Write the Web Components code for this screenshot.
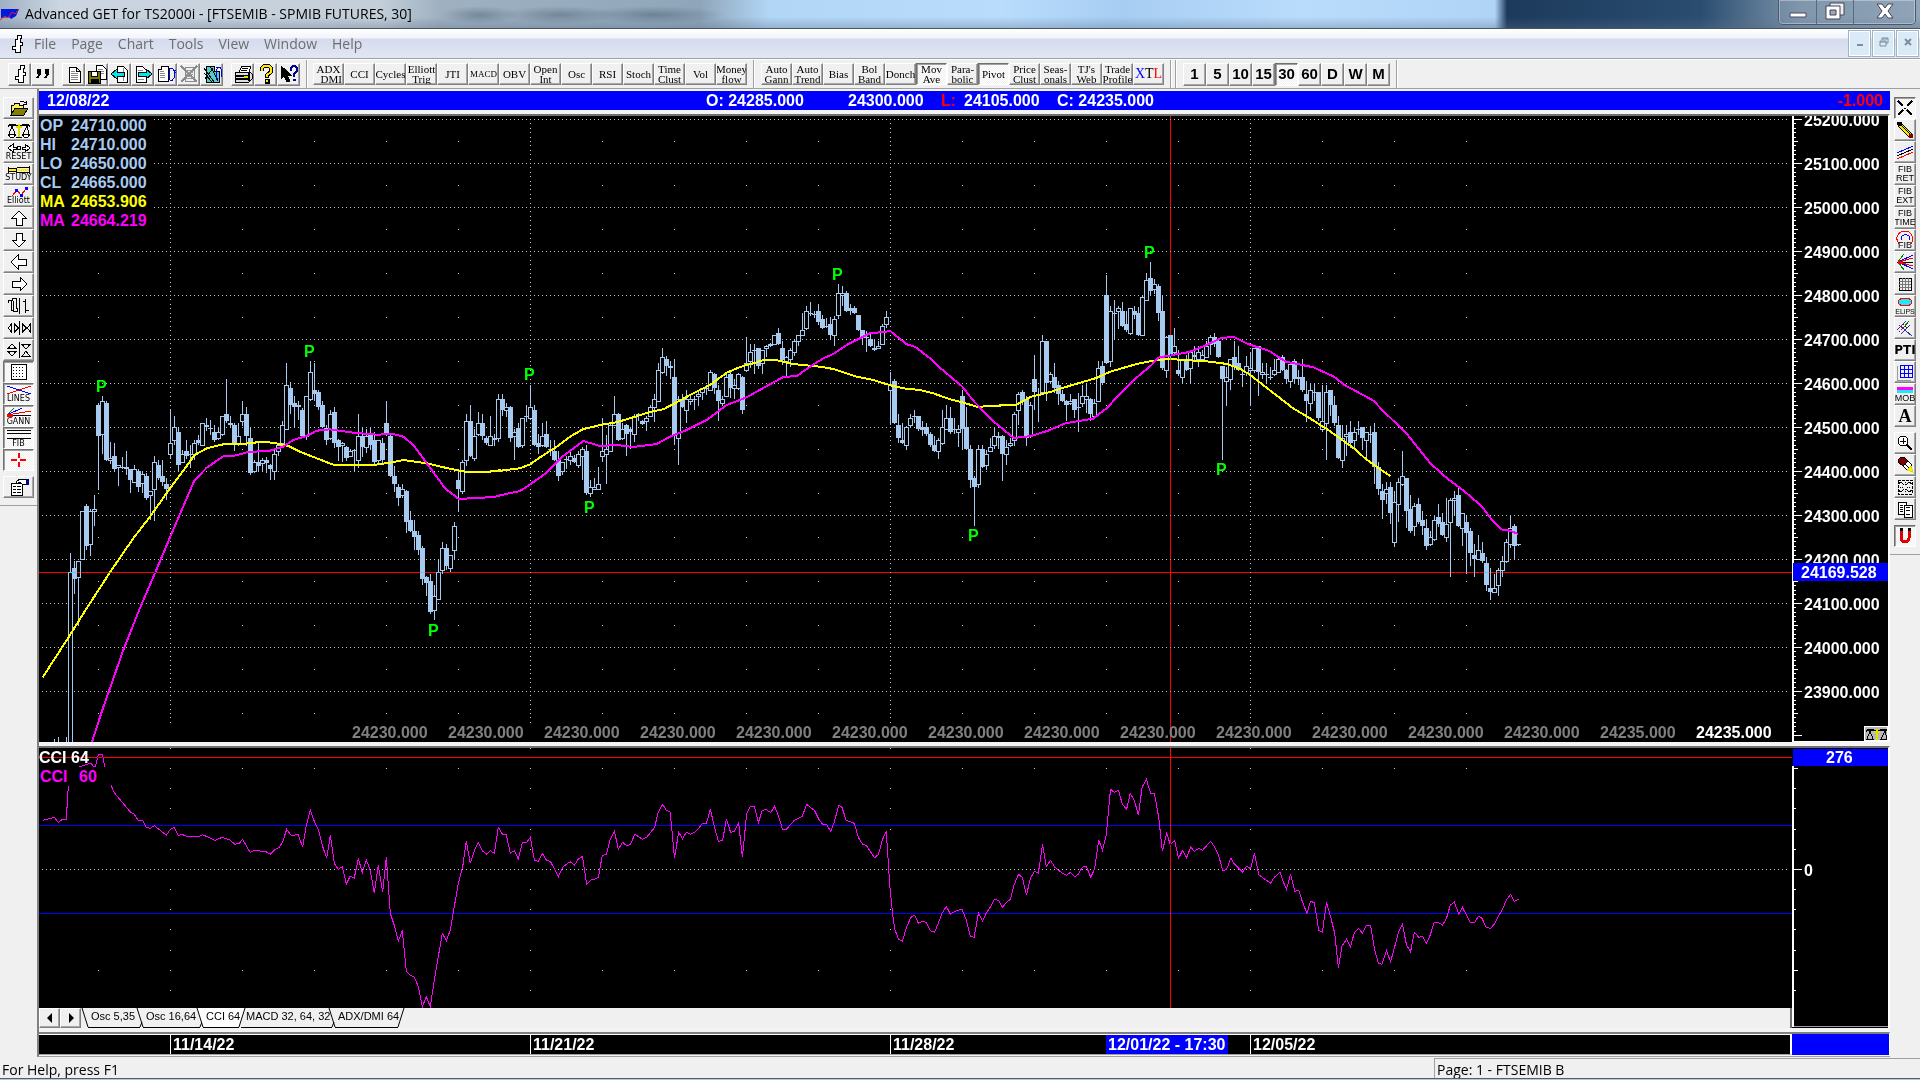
<!DOCTYPE html>
<html lang="en">
<head>
<meta charset="utf-8">
<title>Advanced GET for TS2000i</title>
<style>
  html, body { margin: 0; height: 100%; overflow: hidden; }
  body { background: #f0f0f0; font-family: "Liberation Sans", Arial, sans-serif; color: #000; }
</style>
</head>
<body>
<get-window></get-window>

<script>
const svg = (w, h, body) =>
  `<svg width="${w}" height="${h}" viewBox="0 0 ${w} ${h}" fill="none" stroke="#000" shape-rendering="crispEdges" aria-hidden="true">${body}</svg>`;

const SCALES = '<path d="M1 5l2-3h4l4 2h2l4-2h4l2 3" /><path d="M3 3h4l4 2h2l4-2h4"/><path d="M12 2v13M9 5h6" stroke="#dede00" stroke-width="2"/><path d="M9 15h6M5 4L2 12M5 4l3 8M20 4l-4 8M20 4l2 8"/><path d="M1 12h8l-2 3H3zM15 12h8l-2 3h-4z" fill="#fff"/>';

const ICONS = {
  bar: svg(18, 20, '<path d="M9.500 1.500h4v3h-1v4h2v3h-2v7h-5v-3h-3v-3h3v-7h2z" fill="#fff"/>'),
  quote: svg(18, 18, '<path d="M6 6v3l-3 4M14 6v3l-3 4" stroke-width="2"/><path d="M3 4h3v4H3zM11 4h3v4h-3z" fill="#000"/>'),
  page: svg(18, 18, '<path d="M4 2h7l4 4v11H4zM11 2v4h4" fill="#fff"/><path d="M6 6h4M6 8h7M6 10h7M6 12h7M6 14h7" stroke="#888"/>'),
  save: svg(20, 20, '<path d="M9 1h6l4 4v10H9z" fill="#fff"/><path d="M11 5h5M11 7h6M11 9h6" stroke="#888"/><path d="M1 7h12v12H1z" fill="#787800"/><path d="M4 7h6v5H4z" fill="#fff"/><path d="M4 15h7v4H4z" fill="#000"/>'),
  prev: svg(20, 20, '<path d="M7 2h6l4 4v12H7z" fill="#fff"/><path d="M13 4v13" stroke="#888"/><path d="M1 10l6-5v3h7v4H7v3z" fill="#00e5ee"/>'),
  next: svg(20, 20, '<path d="M3 2h6l4 4v12H3z" fill="#fff"/><path d="M5 6h5M5 15h6" stroke="#888"/><path d="M19 10l-6-5v3H5v4h8v3z" fill="#00e5ee"/>'),
  flip: svg(20, 20, '<path d="M5 2h7v15H2V5h3z" fill="#fff"/><path d="M4 7h4M4 9h5M4 11h5M4 13h5" stroke="#888"/><path d="M15 4l-2 2v9l2 2 2-1M13 4h3l2 2v8l-2 2M18 8h2M17 6h3" stroke="#0000d8"/>'),
  noPage: svg(20, 20, '<path d="M2 2l16 16M18 2L2 18" stroke="#8a8a8a" stroke-width="2"/><path d="M6 3h9v14H6z" stroke="#8a8a8a"/><path d="M7 6h7M7 8h7M7 10h7M7 12h7M7 14h7" stroke="#999"/>'),
  flipAll: svg(20, 20, '<path d="M4 2h8v5h5v11H4z" fill="#5cc"/><path d="M2 4l10 14M2 9l8 9M8 2l8 14M3 15l8-11" /><path d="M16 4l-2 2v9l2 2M14 3h4l1 2v8" stroke="#0000d8"/>'),
  print: svg(20, 20, '<path d="M6 8l3-6h9l-2 6" fill="#fff"/><path d="M9 4h6M8 6h6"/><path d="M2 8h15l2 2v5l-3 3H2z" fill="#ddd"/><path d="M2 12h14M16 9v8M3 15h12" stroke-width="2"/><path d="M11 13h4" stroke="#dede00" stroke-width="2"/>'),
  help: svg(18, 20, '<path d="M5 7V4l2-2h5l2 2v4l-4 3v3" stroke-width="4"/><path d="M8 15h4v4H8z" fill="#000"/><path d="M5 7V4l2-2h5l2 2v4l-4 3v2M9 17h2" stroke="#ffe800" stroke-width="2"/>'),
  arrowHelp: svg(20, 20, '<path d="M2 2v13l3-3 3 6 3-1-3-6h4z" fill="#000"/><path d="M12 7V4l2-2h2l2 2v3l-3 3v3M14 16h3" stroke="#000090" stroke-width="2"/>'),

  open: svg(20, 16, '<path d="M2 15V5h3l1-2h4v2h4v3" fill="#ffef60"/><path d="M2 15l4-7h13l-4 7z" fill="#808000"/><path d="M11 2l2-1 4 2v2M14 4h3V1"/>'),
  scales: svg(24, 16, SCALES),
  reset: svg(24, 10, '<path d="M1 5l5-4v3h3v2H6v3zM23 5l-5-4v3h-3v2h3v3z" fill="#fff"/><circle cx="12" cy="5" r="2"/>'),
  study: svg(24, 8, '<path d="M1.500 1v6M1.500 2.500h8M1.500 5.500h8M9.500 1.500h13M9.500 6.500h13M9.500 1.500v5M22.500 0v8"/><path d="M2 4h7M10 4h12" stroke="#ffef00" stroke-width="2"/>'),
  elliott: svg(18, 10, '<path d="M2 9l5-6 4 5 5-6" stroke="#f00"/><path d="M5 2h2v2H5zM10 7h2v2h-2zM15 0h2v2h-2z" stroke="#00f" fill="#00f"/>'),
  up: svg(18, 16, '<path d="M9 1l7 7h-4v7H6V8H2z" fill="#fff"/>'),
  down: svg(18, 16, '<path d="M9 15l7-7h-4V1H6v7H2z" fill="#fff"/>'),
  left: svg(18, 16, '<path d="M1 8l7-7v4h8v6H8v4z" fill="#fff"/>'),
  right: svg(18, 16, '<path d="M17 8l-7-7v4H2v6h8v4z" fill="#fff"/>'),
  bars: svg(24, 18, '<path d="M1.500 5.500v-2h4v-2h4v10h1v3h-4v-11M4.500 3.500v10h2v-9M12.500 1v16M18.500 2v14M16 4.500h2M18 13.500h4"/>'),
  hzoom: svg(24, 16, '<path d="M4.500 4v8L1 8zM7.500 4v8l4-4zM12.500 1v14M15.500 4v8l4-4zM23.500 4v8L20 8z" stroke-width="1"/>'),
  vzoom: svg(24, 18, '<path d="M1 7.500L5 3l4 4.500zM1 10.500L5 15l4-4.500zM12.500 1v16M15 3.500h8L19 8zM15 15.500h8L19 10z"/>'),
  grid: svg(18, 18, '<path d="M1 1h15v15H1z" fill="#fff" stroke-width="1"/><path d="M3 4h12M3 7h12M3 10h12M3 13h12" stroke-dasharray="1 2"/>'),
  lines: svg(26, 10, '<path d="M1 1l24 8" stroke="#00f"/><path d="M1 9l24-8" stroke="#f00"/>'),
  gann: svg(26, 11, '<path d="M1 8l7-7" stroke="#008000"/><path d="M1 8l15-7" stroke="#00f"/><path d="M1 8l24-4" stroke="#f00"/><path d="M1 8h24"/><path d="M1 8h6" stroke="#f00" stroke-width="3"/>'),
  fib: svg(26, 11, '<path d="M1 1.500h24M1 4.500h24M1 9.500h24"/>'),
  cross: svg(18, 16, '<path d="M1 8h6M10 8h6M8.500 1v5M8.500 10v5" stroke="#f00" stroke-width="2"/>'),
  props: svg(20, 18, '<path d="M2 5h11v12H2z" fill="#fff"/><path d="M4 8h3M8 8h4M4 11h3M8 11h4M4 14h3M8 14h4"/><path d="M7 4l4-3h6v5h-4l-2-2-3 2z" fill="#fff"/><path d="M18 1v6" stroke="#000080" stroke-width="3"/>'),

  select: svg(18, 18, '<path d="M2 2l5 5M16 2l-5 5M2 16l5-5M16 16l-5-5" stroke-width="2"/><path d="M8 9h2"/>'),
  pencil: svg(18, 18, '<path d="M2 2h3l10 10v3h-3L2 5z" fill="#f2ea00"/><path d="M5 4l10 10"/><path d="M1 1h4v3H2z" fill="#000"/><path d="M13 13h3v3h-3z" fill="#800000" stroke="#800000"/>'),
  trend: svg(18, 16, '<path d="M1 9L17 2" stroke="#00f"/><path d="M1 12l16-7"/><path d="M1 15l16-7" stroke="#f00"/>'),
  arc: svg(20, 20, '<path d="M4 14C-2 6 6 1 10 1s11 5 6 13" stroke="#f00"/><path d="M6 10c0-7 9-7 9 0" stroke="#00f"/><text x="10" y="18" text-anchor="middle" font-size="9" font-family="Liberation Sans" fill="#000" stroke="none">FIB</text>'),
  fan: svg(18, 18, '<path d="M2 9l6-8M2 9l6 8" stroke="#008000"/><path d="M2 9L17 2M2 9l15 7" stroke="#00f"/><path d="M2 9l15-4M2 9l15 4" stroke="#f00"/><path d="M1 9h16"/><path d="M2 9h5" stroke="#f00" stroke-width="3"/>'),
  mesh: svg(16, 16, '<path d="M2 2h12v12H2z"/><path d="M2 5h12M2 8h12M2 11h12M5 2v12M8 2v12M11 2v12" stroke="#777"/>'),
  ellipse: svg(18, 11, '<ellipse cx="9" cy="5" rx="7" ry="4" fill="#20e8f8" stroke="#f00"/>'),
  fork: svg(18, 18, '<path d="M1 11L10 2M5 15l9-9M3 6l13 11" stroke="#333399"/><path d="M8 8l5-6" stroke="#008000"/><path d="M3 13l5-5M7 5l4 4" stroke="#900" stroke-dasharray="2 1"/>'),
  blueGrid: svg(18, 18, '<path d="M1 3v14h14" stroke="#999"/><path d="M4 2h12v12H4zM4 6h12M4 10h12M8 2v12M12 2v12" stroke="#00f"/>'),
  mob: svg(18, 8, '<path d="M1 2h16" stroke="#f0f" stroke-width="3"/><path d="M1 5h16" stroke="#20e8f8" stroke-width="3"/>'),
  zoom: svg(18, 18, '<circle cx="7" cy="7" r="5" fill="#fff"/><path d="M4 7h6M7 4v6"/><path d="M11 11l5 5" stroke-width="2"/>'),
  eraser: svg(18, 18, '<path d="M2 4l3-3h3l4 4-5 5-5-4z" fill="#800000"/><path d="M12 5l4 4-5 5-4-4z" fill="#fff"/><path d="M15 10l2 6-6-2z" fill="#ffef00" stroke="#dcdc00"/><path d="M9 8l4 4"/>'),
  pattern: svg(18, 18, '<path d="M2 2h14v14H2z" stroke-dasharray="3 1"/><path d="M2 6l3-2 3 3M16 6l-3-2-3 3M2 12l3 2 3-3M16 12l-3 2-3-3"/><path d="M4 9h3M11 9h3M9 4v3M9 11v3" stroke-dasharray="1 1"/>'),
  copy: svg(18, 18, '<path d="M2 2h8v12H2z" fill="#fff"/><path d="M8 5h8v12H8z" fill="#fff"/><path d="M4 5h3M4 7h3M4 9h3M4 11h3M10 8l2-1 2 1M10 11l2-1 2 1M10 14h4"/>'),
  magnet: svg(18, 18, '<path d="M5 3v8c0 5 8 5 8 0V3" stroke="#e00000" stroke-width="3"/><path d="M5 1v3M13 1v3" stroke-width="3"/>'),
};

// Bars are "high,top,bottom,low" in thirds of a pixel below the run's origin; a trailing f marks a filled body.
const BARS = [
  { x: 70, y: 340, bars: '640,697,1220,1206 663,685,718,762f 663,664,712,860 514,514,658,662 492,499,619,630f 508,514,613,650 465,508,514,558 190,195,289,452f 168,184,283,342 183,189,361,363f 308,355,361,374 310,350,388,395f 376,376,382,440 353,382,385,388 333,382,388,407f 388,388,422,459f 376,388,426,430 388,394,442,458f 394,402,430,460 400,408,475,480f 453,453,467,540 348,367,448,545 362,375,416,420f 360,409,428,440f 416,433,449,480f 210,311,343,356 228,262,300,315 262,276,376,395f 330,343,367,371 300,334,348,358f 315,343,346,386 300,311,344,362 286,300,311,315f 250,250,316,320 234,256,262,275f 242,266,269,285 255,276,302,307f 266,278,296,300 228,229,284,288 117,223,244,250f 228,250,256,265f 250,256,316,333f 250,290,310,320 183,223,244,260 201,222,289,320f 266,295,401,407f 360,367,394,400 310,367,378,395f 355,361,370,398 352,361,371,400f 374,376,388,420f 330,343,394,420 310,316,334,350 244,256,310,325 69,136,268,272 128,144,196,222f 168,190,202,266f 184,196,202,242f 204,210,290,290f 168,170,289,300 63,97,178,183 69,150,163,183f 152,157,203,210f 183,196,262,264f 256,264,302,315f 210,223,295,300 201,217,310,325f 298,302,322,365f 308,311,317,366 320,322,355,363f 328,335,349,352 327,332,334,398 222,290,361,386 261,290,322,352f 267,290,322,340 261,283,317,330f 277,302,367,376f 302,302,361,371 295,310,361,374f 183,250,284,290f 282,289,409,412f 380,409,433,458f 432,442,475,498f 433,448,466,476 452,454,547,580f 513,541,575,578f 540,574,592,630f 573,587,631,645f 618,625,718,735f 710,712,730,768f 702,724,818,822f 735,769,811,842 657,697,778,782 606,625,691,702 612,626,680,690f 646,646,685,696 546,559,631,660 395,421,448,518f 361,367,454,464 223,244,361,380 196,244,350,353f 267,290,355,365 216,250,283,290 222,250,290,302f 288,295,311,315f 228,289,316,320 282,296,302,320f 162,178,296,308 162,178,210,228f 190,202,210,232 200,202,296,308f 267,276,290,360 250,266,323,325f' },
  { x: 522, y: 250, bars: '505,505,586,596 465,498,501,518 405,472,505,510 465,480,587,590f 553,580,592,612f 519,559,586,592 513,553,593,596f 570,597,600,618 570,605,631,635f 603,630,680,695f 636,637,664,676 618,629,632,657 603,619,631,645 615,625,637,640f 604,613,646,655 592,598,619,690 585,604,731,735f 690,712,730,743 684,712,718,720 651,703,718,722 504,605,619,637 555,598,613,702 520,526,604,608 438,493,526,530 490,493,572,575f 519,538,566,570 523,526,553,618f 535,538,548,597f 492,499,553,578 490,493,500,515f 510,514,522,526f 500,505,514,545 465,472,499,502 432,448,472,518 339,361,454,458 294,322,367,372 320,328,349,380f 334,349,355,388f 328,382,560,585f 438,448,566,645 432,448,472,476f 420,448,481,519 436,448,454,466 438,448,451,480 426,433,439,468 414,415,427,452 405,414,417,437 361,367,421,425 370,373,415,432f 405,421,454,513f 438,448,460,470 367,382,439,442 363,373,415,445f 387,406,415,448 370,374,416,420 380,382,481,492f 261,340,361,366 282,307,334,355 282,300,303,372 294,295,349,358f 300,301,340,372 285,290,295,322 280,282,290,292f 255,256,283,286 234,250,283,287f 273,295,332,347f 318,322,335,380 294,301,328,352 268,275,307,320 255,256,275,290 190,241,256,260 168,184,235,240 156,190,193,200 184,192,196,206 162,184,217,225f 195,208,235,239f 205,228,231,236 201,223,256,270f 200,208,256,288 102,130,196,207 108,130,136,168 123,130,184,187f 162,175,184,195f 170,175,190,193f 195,196,241,244f 240,241,262,287f 244,262,265,306 249,267,290,293f 267,295,301,305f 273,290,296,298 223,229,283,286 183,202,223,234 366,402,421,525 388,394,520,524f 492,526,565,580f 520,571,580,584f 530,532,587,600 492,506,527,535 480,500,503,520 498,500,538,544f 513,532,541,558f 520,532,553,560f 547,553,586,592f 559,587,605,607f 564,572,604,629 480,532,580,586 465,505,538,542 471,505,548,552f 505,538,541,552 525,538,547,592 420,439,538,598f 471,532,598,600f 585,598,691,715f 678,685,712,828f 586,598,703,716 585,598,653,656f 600,613,646,660 565,592,605,608 531,559,586,598 547,559,566,597f 556,559,613,695f 570,592,613,645 564,580,586,592 488,493,571,590 426,433,480,525' },
  { x: 1022, y: 230, bars: '480,487,515,525f 500,508,625,650f 518,526,620,625 375,448,487,540f 474,493,500,578f 315,334,487,490 334,334,460,513f 427,434,454,460 399,442,475,490f 453,466,493,525f 480,493,515,518f 512,514,526,573f 492,514,520,525 507,508,541,564f 490,531,534,606 465,499,520,532 462,500,508,550 505,508,553,573f 508,520,559,563 393,415,514,518 393,409,461,465f 135,196,400,404f 228,244,394,413 210,249,252,330 228,236,244,298 216,244,289,292f 244,283,302,306f 234,236,310,315 228,244,256,267f 232,250,317,320f 195,202,316,320 129,151,211,215 96,145,184,200f 147,163,178,193 163,169,250,275f 196,244,415,420f 320,322,421,446 316,316,377,392f 294,349,367,380 360,420,434,440f 388,389,442,460 375,388,421,425f 367,367,415,461 348,375,383,390f 350,367,389,413 360,376,388,392 333,349,382,386 315,322,343,375 309,322,343,353f 330,334,382,386f 409,409,448,690f 412,442,454,530 387,388,448,480 333,382,409,420f 348,400,421,425f 425,433,436,473 380,409,428,440 366,415,421,530 354,355,421,430 348,349,427,498f 400,428,434,448 400,432,435,460 412,441,444,452 387,421,433,440 386,388,428,430 375,382,421,425f 418,421,448,464f 400,402,454,474 388,394,448,461f 420,442,448,465f 387,442,482,486f 453,493,514,578f 459,481,520,545 461,486,489,513 487,487,566,573f 465,574,598,606 466,487,580,690 480,481,526,558f 498,526,580,590f 558,586,685,689f 586,625,691,716 586,613,619,678 573,607,640,655f 592,607,631,657 573,597,600,615 591,592,625,660f 606,607,631,690 590,612,615,640 579,607,712,762f 697,712,778,795f 762,784,811,869f 756,778,790,822 757,772,850,882f 783,817,937,953 745,757,823,876 663,739,763,768 744,745,844,895f 795,838,905,909f 820,829,889,920 804,823,878,882f 843,871,889,915f 869,895,949,960f 903,922,943,948 855,871,928,933 822,862,883,892f 850,878,916,920f 804,883,922,936 804,811,878,1041 783,805,811,857 775,796,889,893f 850,850,895,948 860,878,911,1032f 895,904,970,1008f 942,976,989,1041f 915,961,988,992 936,970,995,1000f 981,1000,1067,1085f 1014,1075,1088,1112f 1032,1075,1087,1091 1014,1021,1066,1098 980,994,1021,1041 928,937,994,999 855,895,943,954 882,889,949,990f 943,943,946,948' },
];

// Line runs: origin, horizontal scale, then x,y pairs. Vertical scale is always three units per pixel.
const SLOW_MA = [
  [40, 340, 3, '8,1012 90,885 140,805 210,697 280,595 330,530 391,444 430,392 463,346 500,325 550,313 600,313 660,306 700,308 745,318 780,335 830,355 880,374 920,376 1000,375 1050,368 1090,360 1160,370 1220,384 1280,396 1340,396 1380,391'],
  [500, 250, 3, '0,662 60,655 91,643 120,622 170,590 210,560 250,537 310,523 350,517 400,502 450,486 490,478 530,457 580,430 630,405 680,368 720,351 760,340 790,330 830,331 880,342 960,350 1000,357 1070,380 1120,390 1171,406 1210,415 1260,420 1300,430 1350,448 1387,457 1430,470 1470,469 1500,467'],
  [1000, 230, 2.904, '0,526 48,524 90,500 150,485 200,468 280,444 320,425 400,401 440,393 490,387 550,391 600,394 660,402 700,418 727,435 780,478 850,534 900,565 950,598 985,623 1030,657 1060,685 1110,722 1134,738'],
];
const FAST_MA = [
  [40, 340, 3, '156,1206 187,1110 210,1045 250,930 300,804 346,697 391,590 463,422 500,383 550,349 580,348 625,336 690,332 730,320 760,300 800,288 830,272 870,268 930,277 1010,284 1060,282 1090,290 1120,315 1165,376 1215,445 1255,476 1310,475 1375,469'],
  [500, 250, 3, '0,736 60,723 91,703 140,668 190,618 250,573 300,588 350,585 400,591 470,582 510,560 560,540 620,510 680,465 740,442 800,408 850,381 890,378 930,350 970,325 1000,312 1040,285 1110,250 1150,246 1171,243 1220,283 1245,290 1290,325 1310,345 1387,410 1420,452 1480,514'],
  [1000, 230, 2.904, '0,590 40,624 90,618 140,602 190,580 270,566 310,535 350,490 400,440 440,405 460,383 500,375 550,366 600,345 640,325 678,320 720,342 780,362 830,395 910,412 970,440 1000,465 1085,512 1110,540 1180,610 1250,700 1290,738 1350,785 1400,830 1430,872 1455,898 1480,902 1505,912'],
];
const CCI = [
  [36, 740, 3, '22,241 55,232 67,247 78,239 91,238 97,138 104,90 165,69 172,80 178,80 187,44 199,43 206,80 226,138 236,160 270,200 283,216 295,223 307,241 320,241 330,262 343,265 355,257 391,286 403,268 415,262 427,286 440,284 451,289 487,291 500,284 537,301 559,292 580,299 597,313 610,310 620,298 642,337 655,331 690,335 703,343 718,328 730,322 740,305 752,268 765,286 787,284 800,322 811,256 823,211 835,244 847,268 860,320 872,355 883,286 895,370 907,388 919,380 931,432 943,408 955,414 967,355 979,398 991,359 1003,392 1015,460 1027,376 1040,455 1051,352 1063,520 1075,556 1087,604 1099,571 1111,694 1123,705 1135,711 1147,740 1159,800 1171,770 1183,800 1195,720 1207,650 1219,580 1231,602 1243,570 1255,500 1267,430 1280,380 1291,304 1303,370 1315,332 1327,308 1339,332 1351,343 1363,332 1375,340 1387,262 1400,284 1411,284 1423,340 1435,332 1447,357 1459,308 1471,308 1483,292 1495,360 1507,364 1519,340 1531,360 1543,364'],
  [556, 740, 2.119, '0,395 5,410 15,380 30,365 39,376 47,358 56,349 65,433 74,420 82,418 90,411 98,347 107,343 115,298 124,274 132,328 141,307 150,317 158,313 167,283 183,298 192,292 200,278 209,262 217,215 226,193 234,211 242,216 251,353 260,277 268,296 276,277 285,283 294,277 302,266 310,250 319,250 327,208 335,256 344,304 353,301 361,238 370,277 378,274 387,248 395,352 404,220 412,199 420,199 429,247 437,212 445,208 455,218 463,199 471,226 480,268 488,268 505,241 522,229 531,193 548,212 557,238 565,253 573,253 582,274 590,245 599,196 606,202 615,241 632,250 641,293 650,313 658,317 675,353 683,344 692,298 700,274 707,430 713,520 718,568 726,598 734,604 743,560 752,532 760,526 768,550 777,543 784,547 793,572 802,577 810,550 818,520 827,499 836,523 845,514 860,508 869,538 878,589 886,592 895,520 904,544 912,518 920,502 929,478 938,481 946,502 955,487 963,478 971,434 980,403 988,412 997,466 1005,415 1014,394 1022,400 1031,313 1039,380 1048,361 1057,382 1073,400 1082,406 1090,397 1099,410 1107,403 1115,382 1124,379 1133,412 1141,388 1150,300 1158,331 1166,285 1175,148 1183,157 1192,151 1200,193 1209,208 1217,160 1226,184 1234,226 1242,142 1251,118 1260,160 1268,160 1277,230 1285,334 1294,280 1302,314 1311,301 1319,355 1328,331 1336,353 1345,322 1353,334 1362,325 1370,331 1387,304 1396,322 1404,346 1413,392 1421,388 1430,355 1438,373 1455,397 1463,379 1472,386 1480,340 1489,404 1514,430 1522,412'],
  [1280, 700, 2.45, '0,517 8,545 16,568 26,523 36,574 46,571 55,605 66,640 75,604 84,608 95,691 104,697 114,607 124,650 134,700 143,803 152,738 163,718 173,740 182,698 192,685 202,700 212,676 222,676 232,750 241,789 250,793 261,752 271,785 280,745 290,697 300,673 310,735 320,755 329,697 340,712 349,709 359,730 368,705 378,667 388,667 398,676 408,655 417,616 427,606 438,643 447,622 466,667 477,667 486,649 495,655 505,682 516,685 525,673 535,649 545,628 555,600 565,583 574,604 585,598'],
];
const PIVOTS = [[96, 392], [304, 357], [428, 636], [524, 380], [584, 513], [832, 280], [968, 541], [1144, 258], [1216, 475]];
const WEEKS = [170, 530, 890, 1250];

const points = (runs) => runs.map(([x, y, s, list]) =>
  list.split(' ').map((p) => {
    const [a, b] = p.split(',');
    return `${(x + a / s).toFixed(1)},${(y + b / 3).toFixed(1)}`;
  }).join(' ')).join(' ');

const candles = () => BARS.map(({ x, y, bars }) => bars.split(' ').map((bar, i) => {
  const filled = bar.endsWith('f');
  const [h, t, b, l] = bar.replace('f', '').split(',').map((v) => Math.floor(y + v / 3));
  const cx = x + i * 4;
  const wick = `<path d="M${cx} ${h}h1V${l}h-1z" fill="#a6caf0"/>`;
  if (filled || b - t < 2) {
    return `${wick}<path d="M${cx - 2} ${t}h5V${Math.max(b, t + 1)}h-5z" fill="#a6caf0"/>`;
  }
  return `${wick}<path d="M${cx - 1.5} ${t + 0.5}h4V${b + 0.5}h-4z" fill="#000" stroke="#a6caf0"/>`;
}).join('')).join('');

class BaseElement extends HTMLElement {
  constructor() {
    super();
    this.attachShadow({ mode: 'open' });
  }

  connectedCallback() {
    const template = document.createElement('template');
    template.innerHTML = this.template();
    this.shadowRoot.replaceChildren(template.content.cloneNode(true));
    this.setup();
  }

  setup() {}
}

class TitleBar extends BaseElement {
  template() {
    return `
      <style>
        :host {
          display: flex;
          height: 28px;
          align-items: center;
          border-bottom: 1px solid #4b5560;
          background:
            linear-gradient(#fff0 60%, #5a6f8555),
            radial-gradient(ellipse 40px 9px at 480px 15px, #607487aa, #60748700),
            radial-gradient(ellipse 60px 9px at 560px 15px, #607487aa, #60748700),
            radial-gradient(ellipse 70px 9px at 655px 15px, #607487bb, #60748700),
            linear-gradient(90deg, #9fb1c4 0, #cbd6e2 60px, #c3ced9 380px, #9fb1c1 440px, #8fa6ba 700px, #b2d6f6 770px, #b9dcfc 1000px, #a7cdf2 1120px, #b9dcfc 1300px, #b0d4f6 1495px, #1c3a5c 1507px, #2a4d70 1700px, #7c93aa 1800px, #91a5b9 100%);
        }
        svg.logo { margin: 0 5px 0 0; }
        h1 { flex: 1; margin: 0; font: 14px/20px "Open Sans", sans-serif; }
        .box {
          display: flex;
          align-self: flex-start;
          margin-right: 4px;
          height: 24px;
          border: 1px solid #4a5a6c;
          border-top: 0;
          border-radius: 0 0 5px 5px;
          box-shadow: inset 0 0 0 1px #ffffff66;
        }
        button { width: 37px; padding: 0; border: 0; border-left: 1px solid #5b6b7d; background: #8fa3b733; }
        button:first-child { border-left: 0; }
        button:last-child { width: 62px; }
      </style>
      <svg class="logo" width="20" height="20" aria-hidden="true"><path d="M1 5h18l-3 7-5 3-2-2-8 1z" fill="#0018e0"/><path d="M0 16l5-4 3 2 4-6 3 2 4-5" fill="none" stroke="#f02020"/></svg>
      <h1>Advanced GET for TS2000i - [FTSEMIB - SPMIB FUTURES, 30]</h1>
      <div class="box">
        <button aria-label="Minimize"><svg width="20" height="16"><path d="M2 10h16v4H2z" fill="#fff" stroke="#4a4a5a"/></svg></button>
        <button aria-label="Restore"><svg width="20" height="18"><path d="M5 1h14v12H5z" fill="#eee" stroke="#445"/><path d="M1 4h14v13H1z" fill="#fff" stroke="#445"/><path d="M5 8h6v5H5z" fill="#9ab" stroke="#445"/></svg></button>
        <button aria-label="Close"><svg width="22" height="18"><path d="M3 2h5l3 4 3-4h5l-5 7 5 7h-5l-3-4-3 4H3l5-7z" fill="#fff" stroke="#445"/></svg></button>
      </div>`;
  }
}

class MenuBar extends BaseElement {
  template() {
    const items = ['File', 'Page', 'Chart', 'Tools', 'View', 'Window', 'Help'];
    return `
      <style>
        :host {
          display: flex;
          height: 29px;
          align-items: center;
          background: linear-gradient(#fff, #f1f4fa 9px, #d5dbed 10px, #e2e7f5);
          border-bottom: 1px solid #a0a0a0;
        }
        .mark { display: flex; margin: 0 7px 0 8px; }
        nav { display: flex; gap: 15px; flex: 1; padding-left: 1px; }
        a { color: #6d6d6d; text-decoration: none; font: 14px/20px "Open Sans", sans-serif; }
        .mdi { display: flex; gap: 1px; padding-right: 1px; }
        .mdi button { width: 23px; height: 27px; padding: 0; border: 1px solid #9fb4c8; background: #dbeaf7; box-shadow: inset 0 0 0 1px #fff; }
      </style>
      <span class="mark">${ICONS.bar}</span>
      <nav>${items.map((item) => `<a href="#${item.toLowerCase()}">${item}</a>`).join('')}</nav>
      <div class="mdi">
        <button aria-label="Minimize chart"><svg width="12" height="12"><path d="M3 9h6" stroke="#7b8da0" stroke-width="2"/></svg></button>
        <button aria-label="Restore chart"><svg width="12" height="12" fill="none" stroke="#7b8da0"><path d="M4 4V2h6v5H8M2 5h6v5H2zM2 6h6M4 3h6"/></svg></button>
        <button aria-label="Close chart"><svg width="12" height="12"><path d="M3 3l6 6M9 3L3 9" stroke="#7b8da0" stroke-width="2"/></svg></button>
      </div>`;
  }
}

class ToolButton extends BaseElement {
  template() {
    return `
      <style>
        :host { display: block; }
        button {
          display: flex;
          flex-direction: column;
          align-items: center;
          justify-content: center;
          box-sizing: border-box;
          width: var(--tool-width, 23px);
          height: var(--tool-height, 22px);
          padding: 0;
          border: 1px solid;
          border-color: #fff #808080 #808080 #fff;
          box-shadow: inset -1px -1px #a8a8a8;
          background: #f0f0f0;
          color: #000;
          font: inherit;
          overflow: hidden;
          white-space: pre;
          text-align: center;
        }
        button[aria-pressed="true"] {
          border-color: #707070 #fff #fff #707070;
          box-shadow: inset 1px 1px #a0a0a0;
          background: repeating-conic-gradient(#fff 0 25%, #f0f0f0 0 50%) 0 0 / 2px 2px;
        }
      </style>
      <button aria-label="${this.getAttribute('name')}" aria-pressed="${this.hasAttribute('pressed')}"><slot></slot></button>`;
  }

  setup() {
    const button = this.shadowRoot.querySelector('button');
    button.addEventListener('click', () => {
      const pressed = button.getAttribute('aria-pressed') === 'true';
      button.setAttribute('aria-pressed', String(!pressed));
    });
  }
}

const tool = (name, body, pressed = false) =>
  `<tool-button name="${name}"${pressed ? ' pressed' : ''}>${body}</tool-button>`;

class TopTools extends BaseElement {
  template() {
    const icons = (names) => names.map((n) => tool(n, ICONS[n])).join('');
    const words = (names) => names.map((n) => {
      const on = n.startsWith('*');
      const label = n.replace('*', '');
      const small = label === 'MACD' ? ' class="small"' : '';
      return tool(label.replace('\n', ' '), `<span${small}>${label}</span>`, on);
    }).join('');
    const xtl = tool('XTL', '<span class="big"><i style="color:#00f">X</i>T<i style="color:#f00">L</i></span>');
    return `
      <style>
        :host { display: flex; height: 29px; align-items: center; padding-left: 8px; border-top: 1px solid #fff; box-sizing: border-box; height: 30px; border-bottom: 1px solid #a0a0a0; }
        div { display: flex; --tool-height: 23px; }
        .gap { margin-left: 8px; }
        .words { --tool-width: 31px; --tool-height: 22px; font: 11px/10px "Liberation Serif", serif; margin-left: 6px; }
        .trend { margin-left: 7px; }
        .small { font-size: 9px; }
        .big { font-size: 14px; }
        i { font-style: normal; }
        .frames { --tool-width: 23px; margin-left: 7px; font: 15px/18px "Liberation Sans", sans-serif; }
        hr { width: 1px; height: 28px; margin: 0 0 0 6px; border: 0; background: #a0a0a0; box-shadow: 1px 0 #fff; }
        hr.double { margin-left: 4px; }
      </style>
      <div>${icons(['bar', 'quote'])}</div>
      <div class="gap">${icons(['page', 'save', 'prev', 'next', 'flip', 'noPage', 'flipAll'])}</div>
      <div class="gap">${icons(['print', 'help', 'arrowHelp'])}</div>
      <hr>
      <div class="words">${words(['ADX\n  DMI', 'CCI', 'Cycles', 'Elliott\nTrig', 'JTI', 'MACD', 'OBV', 'Open\nInt', 'Osc', 'RSI', 'Stoch', 'Time\nClust', 'Vol', 'Money\nflow'])}</div>
      <hr>
      <div class="words trend">${words(['Auto\nGann', 'Auto\nTrend', 'Bias', 'Bol\nBand', 'Donch', '*Mov\nAve', 'Para-\nbolic', '*Pivot', 'Price\nClust', 'Seas-\nonals', "TJ's\nWeb", 'Trade\nProfile'])}${xtl}</div>
      <hr><hr class="double">
      <div class="frames">${['1', '5', '10', '15', '30', '60', 'D', 'W', 'M'].map((f) => tool(f, `<b>${f}</b>`, f === '30')).join('')}</div>
      <hr>`;
  }
}

class SideTools extends BaseElement {
  template() {
    const cap = (icon, text) => `${ICONS[icon]}<span>${text}</span>`;
    const left = [
      [['Open', ICONS.open], ['Scale', ICONS.scales], ['Reset', cap('reset', 'RESET')], ['Study', cap('study', 'STUDY')],
        ['Elliott', cap('elliott', 'Elliott')], ['Up', ICONS.up], ['Down', ICONS.down], ['Left', ICONS.left], ['Right', ICONS.right],
        ['Bars', ICONS.bars], ['Bar spacing', ICONS.hzoom], ['Price spacing', ICONS.vzoom], ['Grid', ICONS.grid, 1],
        ['Lines', cap('lines', 'LINES'), 1], ['Gann', cap('gann', 'GANN'), 1], ['Fib', cap('fib', 'FIB'), 1], ['Crosshair', ICONS.cross, 1]],
      [['Properties', ICONS.props]],
    ];
    const right = [
      [['Select', ICONS.select, 1], ['Draw', ICONS.pencil], ['Trend lines', ICONS.trend], ['Fib retracement', '<em>FIB\nRET</em>'],
        ['Fib extension', '<em>FIB\nEXT</em>'], ['Fib time', '<em>FIB\nTIME</em>'], ['Fib arc', ICONS.arc], ['Gann fan', ICONS.fan],
        ['Mesh', ICONS.mesh], ['Ellipse', cap('ellipse', 'ELiPS')], ['Pitchfork', ICONS.fork], ['PTI', '<strong>PTI</strong>'],
        ['Gann box', ICONS.blueGrid], ['MOB', `${ICONS.mob}<em>MOB</em>`], ['Text', '<strong class="a">A</strong>']],
      [['Zoom', ICONS.zoom], ['Erase', ICONS.eraser], ['Pattern', ICONS.pattern], ['Copy', ICONS.copy]],
      [['Magnet', ICONS.magnet, 1]],
    ];
    const groups = this.getAttribute('side') === 'left' ? left : right;
    return `
      <style>
        :host {
          display: flex;
          flex-direction: column;
          align-self: flex-start;
          gap: 5px;
          box-sizing: border-box;
          padding: 8px 3px 7px;
          border-bottom: 1px solid #a0a0a0;
          font: 8px/8px "DejaVu Sans", sans-serif;
        }
        :host([side="left"]) { width: 37px; --tool-width: 31px; }
        :host([side="right"]) { width: 30px; --tool-width: 22px; padding-left: 4px; }
        em { font: 9px/9px "Liberation Sans", sans-serif; }
        strong { font: 700 12px/14px "DejaVu Sans", sans-serif; }
        .a { font: 700 18px/18px "Liberation Serif", serif; }
        :host([side="right"]) span { font: 7px/7px "Liberation Sans", sans-serif; }
      </style>
      ${groups.map((g) => `<div>${g.map(([n, b, p]) => tool(n, b, Boolean(p))).join('')}</div>`).join('')}`;
  }
}

class QuoteBar extends BaseElement {
  template() {
    return `
      <style>
        :host {
          display: grid;
          grid-template-columns: 659px 142px 93px 23px 93px 1fr auto;
          height: 19px;
          margin-top: 2px;
          padding: 0 7px 0 8px;
          background: #0000ff;
          color: #fff;
          font-weight: 700;
          font-size: 16px;
          line-height: 19px;
          white-space: nowrap;
        }
        .red { color: #ff0000; }
      </style>
      <span>12/08/22</span><span>O: 24285.000</span><span>24300.000</span>
      <span class="red">L:</span><span>24105.000</span><span>C: 24235.000</span><span class="red">-1.000</span>`;
  }
}

class ChartPane extends BaseElement {
  template() {
    return `
      <style>
        :host {
          display: grid;
          grid-template-columns: 1fr 96px;
          grid-template-rows: 1fr auto;
          min-height: 0;
          margin-top: 4px;
          border-top: 2px solid #707070;
          border-right: 2px solid #fff;
          background: #000;
        }
        .plot, .axis { position: relative; overflow: hidden; min-width: 0; }
        .axis { grid-column: 2; grid-row: 1 / 3; }
      </style>
      <div class="plot"><slot name="plot"></slot></div>
      <div class="axis"><slot name="axis"></slot></div>
      <slot name="foot"></slot>`;
  }
}

const PLOT_STYLE = `
  <style>
    :host { display: block; width: 100%; height: 100%; }
    svg.plot { position: absolute; inset: 0; width: 100%; height: 100%; }
    text, .over { font: 700 16px/19px "Liberation Sans", Arial, sans-serif; }
    .over { position: absolute; white-space: pre; }
    .cross { mix-blend-mode: difference; }
    dl { display: grid; grid-template-columns: 31px auto; margin: 0; }
    dd { margin: 0; }
  </style>`;

class PricePlot extends BaseElement {
  template() {
    let grid = '';
    for (let i = 0; i < 14; i++) {
      const y = 119 + i * 44;
      grid += `<path d="M${i < 3 ? 154 : 42} ${y}.500H1788" stroke-dasharray="1 3"/>`;
      for (let x = 98; x < 1480; x += 72) {
        if (!WEEKS.includes(x)) grid += `<path d="M${x} ${y + 22}.500h1"/>`;
      }
    }
    grid += WEEKS.map((x) => `<path d="M${x}.500 119V724" stroke-dasharray="1 3.400"/>`).join('');
    const values = [...Array(13).fill('24230.000'), '24235.000', '24235.000'];
    return `${PLOT_STYLE}
      <style>
        dl { top: 0; left: 1px; width: 114px; color: #a6caf0; background: #000; }
        .slow { color: #ffff00; }
        .fast { color: #ff00ff; }
        .values { display: flex; left: 313px; bottom: 0; color: #808080; }
        .values span { width: 96px; }
        .values span:last-child { color: #fff; }
      </style>
      <svg class="plot" shape-rendering="crispEdges" fill="none" role="img" aria-label="Price chart">
        <g transform="translate(-39 -116)">
          <g stroke="#c8c8c8">${grid}</g>
          <path d="M54.500 739v3M58.500 737v5M66.500 737v5" stroke="#a6caf0"/>
          ${candles()}
          <polyline points="${points(SLOW_MA)}" stroke="#ffff00" stroke-width="2"/>
          <polyline points="${points(FAST_MA)}" stroke="#ff00ff" stroke-width="2"/>
          <path class="cross" d="M39 572.500H1792M1170.500 116V742" stroke="#ff0000"/>
          <g fill="#00ff00">${PIVOTS.map(([x, y]) => `<text x="${x}" y="${y}">P</text>`).join('')}</g>
        </g>
      </svg>
      <dl class="over">
        <dt>OP</dt><dd>24710.000</dd><dt>HI</dt><dd>24710.000</dd><dt>LO</dt><dd>24650.000</dd><dt>CL</dt><dd>24665.000</dd>
        <dt class="slow">MA</dt><dd class="slow">24653.906</dd><dt class="fast">MA</dt><dd class="fast">24664.219</dd>
      </dl>
      <div class="over values">${values.map((v) => `<span>${v}</span>`).join('')}</div>`;
  }
}

class PriceAxis extends BaseElement {
  template() {
    let marks = '';
    for (let i = 0; i < 141; i++) {
      const y = Math.round(3 + i * 4.4);
      marks += `M2 ${y}.500h${i % 10 === 0 ? 8 : i % 5 === 0 ? 4 : 2}`;
    }
    const labels = Array.from({ length: 14 }, (_, i) =>
      `<text x="12" y="${10 + i * 44}">${25200 - i * 100}.000</text>`).join('');
    return `${PLOT_STYLE}
      <style>
        button { position: absolute; right: 0; bottom: 1px; width: 24px; height: 15px; padding: 0; border: 1px solid #fff; background: #b8b8b8; overflow: hidden; }
        button svg { display: block; }
      </style>
      <svg class="plot" shape-rendering="crispEdges" fill="#fff">
        <path d="M0 0h2v626H0zM0 625h96v1H0z"/><path d="${marks}" stroke="#fff"/>
        ${labels}
        <path d="M1 447h95v18H1z" fill="#0000ff"/><text x="9" y="462">24169.528</text>
      </svg>
      <button aria-label="Scale options">${svg(22, 14, SCALES)}</button>`;
  }
}

class CciPlot extends BaseElement {
  template() {
    let dots = '';
    const rows = [768, 788, 808, 829, 849, 889, 909, 929, 950, 970, 990];
    for (let x = 98; x < 1480; x += 72) {
      const week = WEEKS.includes(x);
      (week ? [748, ...rows] : [768, 970]).forEach((y) => { dots += `M${x} ${y}.500h1`; });
    }
    return `${PLOT_STYLE}
      <style>
        .name { top: 0; left: 0; color: #fff; }
        .value { top: 19px; left: 1px; width: 71px; grid-template-columns: 39px auto; color: #ff00ff; background: #000; }
      </style>
      <svg class="plot" shape-rendering="crispEdges" fill="none" role="img" aria-label="CCI chart">
        <g transform="translate(-39 -748)">
          <path d="${dots}" stroke="#c8c8c8"/>
          <path d="M42 869.500H1788" stroke="#c8c8c8" stroke-dasharray="1 3"/>
          <path d="M39 825.500H1792M39 913.500H1792" stroke="#0000ff"/>
          <polyline points="${points(CCI)}" stroke="#ff00ff"/>
          <path class="cross" d="M39 757.500H1792M1170.500 748V1008" stroke="#ff0000"/>
        </g>
      </svg>
      <span class="over name">CCI 64</span>
      <dl class="over value"><dt>CCI</dt><dd>60</dd></dl>`;
  }
}

class CciAxis extends BaseElement {
  template() {
    const marks = [[20, 4], [40, 2], [60, 2], [81, 2], [101, 2], [121, 8], [141, 2], [161, 2], [181, 2], [202, 2], [222, 4], [242, 2]];
    return `${PLOT_STYLE}
      <svg class="plot" shape-rendering="crispEdges" fill="#fff">
        <path d="M0 18h2v261H0z"/><path d="${marks.map(([y, w]) => `M2 ${y}.500h${w}`).join('')}" stroke="#fff"/>
        <path d="M2 278h94v1H2z" fill="#a0a0a0"/>
        <path d="M1 1h95v17H1z" fill="#0000ff"/>
        <text x="34" y="15">276</text><text x="12" y="128">0</text>
      </svg>`;
  }
}

class SheetTabs extends BaseElement {
  template() {
    const tabs = [['Osc 5,35', 55], ['Osc 16,64', 60], ['CCI 64', 47], ['MACD 32, 64, 32', 85], ['ADX/DMI 64', 74]];
    return `
      <style>
        :host { display: flex; height: 20px; background: #f0f0f0; border-right: 2px solid #707070; }
        .step { width: 21px; height: 20px; padding: 0; border: 1px solid; border-color: #fff #808080 #808080 #fff; background: #f0f0f0; box-shadow: inset -1px -1px #a8a8a8; }
        .step svg { display: block; margin: auto; }
        [role=tablist] { position: relative; z-index: 0; display: flex; margin-left: 1px; }
        .tab {
          position: relative;
          box-sizing: border-box;
          height: 20px;
          padding: 0 0 4px 9px;
          border: 0;
          background: none;
          font: 11px/15px "Liberation Sans", sans-serif;
          text-align: left;
          white-space: nowrap;
        }
        .tab.after { padding-left: 2px; }
        .tab svg { position: absolute; left: 0; top: 0; width: 100%; height: 20px; overflow: visible; z-index: -1; }
      </style>
      <button class="step" aria-label="Previous tab"><svg width="8" height="10"><path d="M6 0v10L1 5z"/></svg></button>
      <button class="step" aria-label="Next tab"><svg width="8" height="10"><path d="M2 0v10l5-5z"/></svg></button>
      <div role="tablist">${tabs.map(([name, w], i) => {
        const on = i === 2;
        const left = i === 3 ? '' : 'M0 0L6 19';
        const right = on || i === 4 ? `M${w + 1} 0L${w - 5} 19` : `M${w + 5} 14L${w + 3} 19`;
        const end = on || i === 4 ? w - 5 : w + 3;
        const face = on ? `<path d="M0 0h${w + 1}l-6 19H6z" fill="#fff" stroke="none"/>` : '';
        return `<button class="tab${i === 3 ? ' after' : ''}" role="tab" aria-selected="${on}" style="width:${w}px"><svg fill="none" stroke="#000">${face}<path d="${left}${right}M${i === 3 ? -3 : 6} 19.500H${end}"/></svg>${name}</button>`;
      }).join('')}</div>`;
  }
}

class DateStrip extends BaseElement {
  template() {
    return `
      <style>
        :host {
          display: grid;
          grid-template-columns: 1fr 97px;
          height: 21px;
          margin-top: 4px;
          border-top: 2px solid #808080;
          border-right: 1px solid #fff;
          font: 700 16px/19px "Liberation Sans", sans-serif;
          color: #fff;
        }
        .dates { position: relative; overflow: hidden; background: #000; border: 1px solid #fff; border-right-width: 2px; border-bottom-color: #a0a0a0; border-left: 0; }
        .dates span { position: absolute; top: 0; height: 19px; padding-left: 2px; border-left: 1px solid #fff; white-space: nowrap; }
        .dates .cursor { padding: 0 3px 0 2px; border: 0; background: #0000ff; }
        .end { background: #0000ff; }
      </style>
      <div class="dates">
        ${['11/14/22', '11/21/22', '11/28/22', '12/05/22'].map((d, i) => `<span style="left:${WEEKS[i] - 39}px">${d}</span>`).join('')}
        <span class="cursor" style="left:1067px">12/01/22 - 17:30</span>
      </div>
      <div class="end"></div>`;
  }
}

class StatusBar extends BaseElement {
  template() {
    return `
      <style>
        :host {
          display: flex;
          height: 20px;
          margin: 1px 0;
          border-bottom: 1px solid #4d5f75;
          box-shadow: 0 1px #b8c6da;
          font: 14px/24px "Open Sans", sans-serif;
          overflow: hidden;
        }
        span { padding-left: 2px; }
        .page { box-sizing: border-box; margin-left: auto; width: 486px; border: solid #a0a0a0; border-width: 1px 0 0 1px; line-height: 22px; }
      </style>
      <span>For Help, press F1</span>
      <span class="page">Page: 1 - FTSEMIB B</span>`;
  }
}

class GetWindow extends BaseElement {
  template() {
    return `
      <style>
        :host { display: flex; flex-direction: column; height: 100vh; background: #f0f0f0; }
        main { display: flex; flex: 1; min-height: 0; }
        .work { display: flex; flex-direction: column; flex: 1; min-width: 0; padding-bottom: 1px; border-left: 2px solid #808080; border-bottom: 1px solid #a0a0a0; background: #f4f4f4; }
        .price { flex: 626 1 0; }
        .cci { flex: 280 1 0; }
      </style>
      <title-bar></title-bar>
      <menu-bar></menu-bar>
      <top-tools></top-tools>
      <main>
        <side-tools side="left"></side-tools>
        <div class="work">
          <quote-bar></quote-bar>
          <chart-pane class="price">
            <price-plot slot="plot"></price-plot>
            <price-axis slot="axis"></price-axis>
          </chart-pane>
          <chart-pane class="cci">
            <cci-plot slot="plot"></cci-plot>
            <cci-axis slot="axis"></cci-axis>
            <sheet-tabs slot="foot"></sheet-tabs>
          </chart-pane>
          <date-strip></date-strip>
        </div>
        <side-tools side="right"></side-tools>
      </main>
      <status-bar></status-bar>`;
  }
}

customElements.define('title-bar', TitleBar);
customElements.define('menu-bar', MenuBar);
customElements.define('tool-button', ToolButton);
customElements.define('top-tools', TopTools);
customElements.define('side-tools', SideTools);
customElements.define('quote-bar', QuoteBar);
customElements.define('chart-pane', ChartPane);
customElements.define('price-plot', PricePlot);
customElements.define('price-axis', PriceAxis);
customElements.define('cci-plot', CciPlot);
customElements.define('cci-axis', CciAxis);
customElements.define('sheet-tabs', SheetTabs);
customElements.define('date-strip', DateStrip);
customElements.define('status-bar', StatusBar);
customElements.define('get-window', GetWindow);
</script>
</body>
</html>
